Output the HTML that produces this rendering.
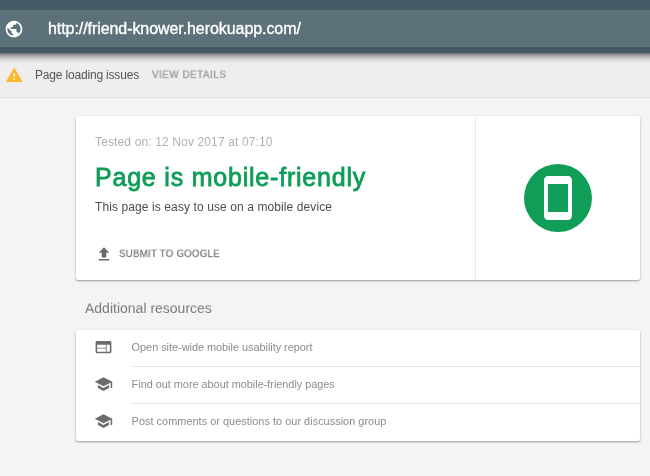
<!DOCTYPE html>
<html lang="en">
<head>
<meta charset="utf-8">
<title>Mobile-Friendly Test</title>
<style>
*{box-sizing:border-box;margin:0;padding:0}
html,body{width:650px;height:476px;overflow:hidden}
body{background:#f4f4f4;font-family:"Liberation Sans",sans-serif;color:#212121;position:relative}
.abs{position:absolute;white-space:nowrap;will-change:transform}
header{position:absolute;left:0;top:0;width:650px;height:53px;background:#455a64;z-index:3}
.shadow{position:absolute;left:0;top:53px;width:650px;height:12px;z-index:2;background:linear-gradient(to bottom,#6f797c 0,#6f797c 1px,#8e8e8e 1px,#8e8e8e 2px,#a5a5a5 2px,#a5a5a5 3px,#b4b4b4 3px,#b4b4b4 4px,#bfbfbf 4px,#bfbfbf 5px,#cccccc 5px,#cccccc 6px,#d4d4d4 6px,#d4d4d4 7px,#dcdcdc 7px,#dcdcdc 8px,#e4e4e4 8px,#e4e4e4 9px,#e9e9e9 9px,#e9e9e9 10px,#ececec 10px,#ececec 11px,#eeeeee 11px)}
.urlband{position:absolute;left:0;top:10px;width:650px;height:37px;background:#5d717b}
.url{left:48.4px;top:10.2px;height:37px;line-height:37px;font-size:16px;color:#fff;letter-spacing:-0.07px;-webkit-text-stroke:0.35px #fff}
.globe{position:absolute;left:4px;top:18.8px;width:20px;height:20px}
.notice{position:absolute;left:0;top:53px;width:650px;height:45px;background:#eee;border-bottom:1px solid #e0e0e0;z-index:1}
.warn{position:absolute;left:4.9px;top:12.6px;width:18.5px;height:18.2px}
.ntext{left:35px;top:-0.3px;height:44px;line-height:44px;font-size:12px;color:#555;letter-spacing:-0.18px}
.nlink{left:151.6px;top:0;height:44px;line-height:43px;font-size:10.4px;color:#9e9e9e;letter-spacing:0.6px;-webkit-text-stroke:0.4px #9e9e9e;transform:scale(0.94,0.9);transform-origin:0 23px}
.card{position:absolute;background:#fff;border-radius:2px;box-shadow:0 1px 3px 0 rgba(0,0,0,.2),0 1px 1.5px 0 rgba(0,0,0,.2)}
#c1{left:76px;top:116px;width:564px;height:164px}
#c2{left:76px;top:330px;width:564px;height:111px}
.vdiv{position:absolute;left:399px;top:0;width:1px;height:164px;background:#eaeaea}
.tested{left:18.8px;top:19px;font-size:12px;line-height:14px;color:#b0b0b0;letter-spacing:0.135px}
.h1{left:19.3px;top:45.8px;font-size:25px;line-height:30px;color:#0f9d58;font-weight:normal;-webkit-text-stroke:0.8px #0f9d58;letter-spacing:0.79px}
.sub{left:18.8px;top:84.4px;font-size:12px;line-height:14px;color:#4d4d4d;letter-spacing:0.1px}
.upl{position:absolute;left:18.8px;top:128.6px;width:18px;height:18.6px}
.submit{left:43.1px;top:129.5px;font-size:10.5px;line-height:14px;color:#777;letter-spacing:0.29px;-webkit-text-stroke:0.25px #777;transform:scale(0.92,0.92);transform-origin:0 10px}
.circle{position:absolute;left:447.6px;top:47.9px;width:68.5px;height:68.3px;border-radius:50%;background:#0f9d58}
.phone{position:absolute;left:10.2px;top:10.1px;width:48px;height:48px}
.sect{left:85px;top:299.6px;font-size:14px;line-height:16px;color:#7a7a7a;letter-spacing:0;transform:scale(1,0.95);transform-origin:0 13px}
.row{position:absolute;left:0;width:564px;height:37px}
.row .ic{position:absolute;left:18.4px;top:7.9px;width:19px;height:18.2px}
.row .tx{will-change:transform;position:absolute;left:56px;top:0;right:0;height:37px;line-height:34.4px;font-size:10.9px;color:#8c8c8c;letter-spacing:-0.04px;text-indent:-0.4px;border-bottom:1px solid #e7e7e7;white-space:nowrap}
.row:last-child .tx{border-bottom:none}
</style>
</head>
<body>
<header>
  <div class="urlband"></div>
  <svg class="globe" viewBox="0 0 24 24"><path fill="#fff" d="M12 2C6.48 2 2 6.48 2 12s4.48 10 10 10 10-4.48 10-10S17.52 2 12 2zm-1 17.93c-3.95-.49-7-3.85-7-7.93 0-.62.08-1.21.21-1.79L9 15v1c0 1.1.9 2 2 2v1.930zm6.900-2.540c-.26-.81-1-1.390-1.900-1.390h-1v-3c0-.55-.45-1-1-1H8v-2h2c.55 0 1-.45 1-1V7h2c1.100 0 2-.9 2-2v-.41c2.930 1.190 5 4.060 5 7.410 0 2.080-.8 3.970-2.100 5.390z"/></svg>
  <div class="abs url">http://friend-knower.herokuapp.com/</div>
</header>
<div class="shadow"></div>
<div class="notice">
  <svg class="warn" viewBox="0 0 24 24" preserveAspectRatio="none"><path fill="#fbb72c" d="M1 21h22L12 2 1 21z"/><path fill="#fff" d="M13 18h-2v-2h2v2zm0-4h-2v-4h2v4z"/></svg>
  <div class="abs ntext">Page loading issues</div>
  <div class="abs nlink">VIEW DETAILS</div>
</div>
<div class="card" id="c1">
  <div class="abs tested">Tested on: 12 Nov 2017 at 07:10</div>
  <div class="abs h1">Page is mobile-friendly</div>
  <div class="abs sub">This page is easy to use on a mobile device</div>
  <svg class="upl" viewBox="0 0 24 24" preserveAspectRatio="none"><path fill="#6b6b6b" d="M9 16h6v-6h4l-7-7-7 7h4zm-4 2h14v2H5z"/></svg>
  <div class="abs submit">SUBMIT TO GOOGLE</div>
  <div class="vdiv"></div>
  <div class="circle"><svg class="phone" viewBox="0 0 24 24"><path fill="#fff" d="M17 1.010L7 1c-1.100 0-2 .9-2 2v18c0 1.100.9 2 2 2h10c1.100 0 2-.9 2-2V3c0-1.100-.9-1.990-2-1.990zM17 19H7V5h10v14z"/></svg></div>
</div>
<div class="abs sect">Additional resources</div>
<div class="card" id="c2">
  <div class="row" style="top:0">
    <svg class="ic" style="top:7.6px;left:18px" viewBox="0 0 24 24" preserveAspectRatio="none"><path fill="#6c6c6c" d="M20 4H4c-1.100 0-1.990.9-1.990 2L2 18c0 1.100.9 2 2 2h16c1.100 0 2-.9 2-2V6c0-1.100-.9-2-2-2zm-5 14H4v-4h11v4zm0-5H4V9h11v4zm5 5h-4V9h4v9z"/></svg>
    <div class="tx" style="letter-spacing:-0.02px">Open site-wide mobile usability report</div>
  </div>
  <div class="row" style="top:37px">
    <svg class="ic" viewBox="0 0 24 24" preserveAspectRatio="none"><path fill="#6c6c6c" d="M5 13.180v4L12 21l7-3.820v-4L12 17l-7-3.820zM12 3L1 9l11 6 9-4.910V17h2V9L12 3z"/></svg>
    <div class="tx" style="letter-spacing:-0.02px">Find out more about mobile-friendly pages</div>
  </div>
  <div class="row" style="top:74px">
    <svg class="ic" viewBox="0 0 24 24" preserveAspectRatio="none"><path fill="#6c6c6c" d="M5 13.180v4L12 21l7-3.820v-4L12 17l-7-3.820zM12 3L1 9l11 6 9-4.910V17h2V9L12 3z"/></svg>
    <div class="tx" style="letter-spacing:0.035px">Post comments or questions to our discussion group</div>
  </div>
</div>
</body>
</html>
